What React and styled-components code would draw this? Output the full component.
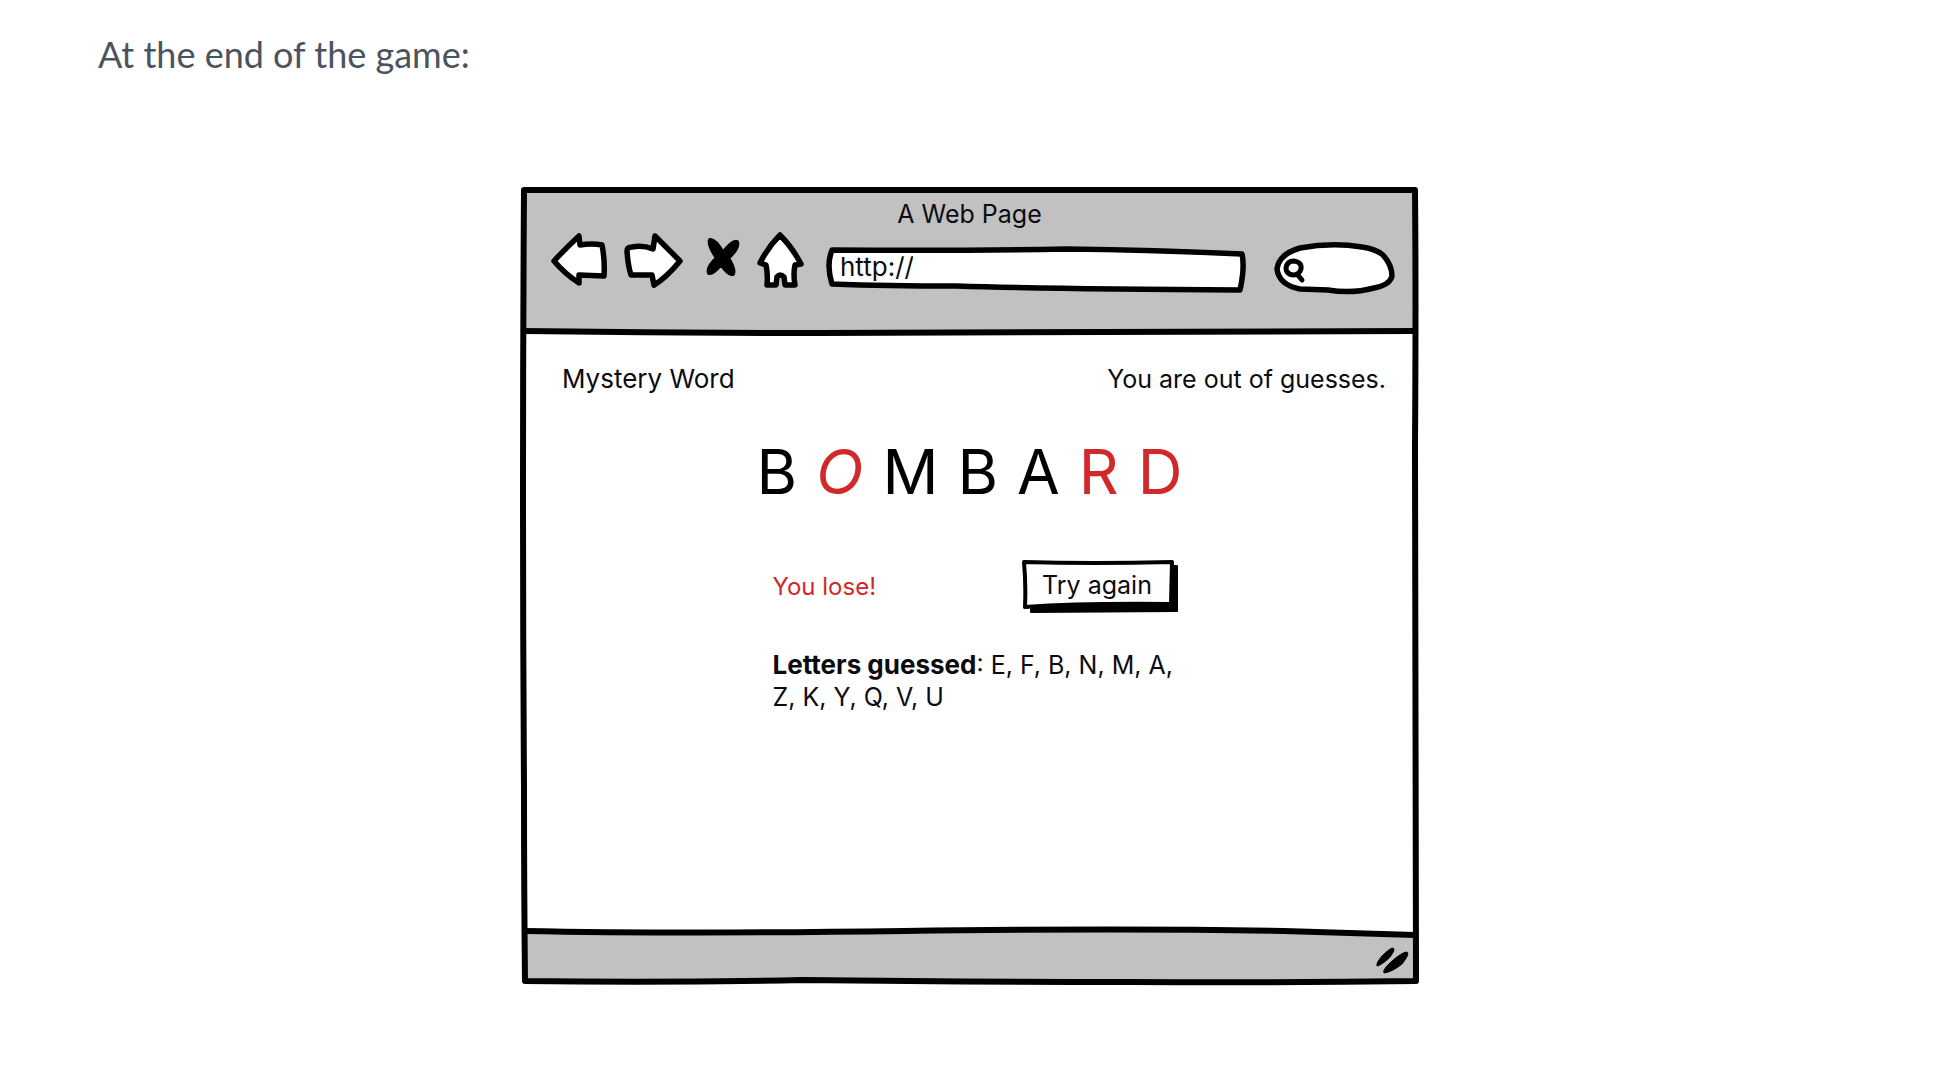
import React from "react";
import styled, { createGlobalStyle } from "styled-components";

const ink = "#000";
const grey = "#c1c1c1";
const red = "#d12929";

const GlobalStyle = createGlobalStyle`
  * { box-sizing: border-box; }
  body { margin: 0; background: #fff; }
`;

const Page = styled.main`
  padding: 27px 103px 80px 98px;
`;

const Caption = styled.p`
  margin: 0 0 106px;
  color: #4b545c;
  font: 400 36px/54px Lato, sans-serif;
`;

const BrowserWindow = styled.section`
  position: relative;
  display: flex;
  flex-direction: column;
  width: 100%;
  max-width: 897px;
  margin: 0 auto;
  color: #0c0c10;
  font: 400 25px/32px Inter, sans-serif;
`;

const Outline = styled.svg`
  position: absolute;
  inset: 0;
  width: 100%;
  height: 100%;
  overflow: visible;
  pointer-events: none;
  fill: none;
  stroke: ${ink};
  stroke-width: 6;
  stroke-linejoin: round;
`;

const Chrome = styled.header`
  margin: 2px 3px 0;
  padding: 9px 0 36px;
  background: ${grey};
`;

const PageTitle = styled.h1`
  margin: 0 0 1px;
  font: inherit;
  text-align: center;
`;

const Toolbar = styled.div`
  display: flex;
  height: 64px;
  padding: 0 20px 0 27px;
`;

const NavButton = styled.button`
  width: ${(p) => p.$width}px;
  margin-right: ${(p) => p.$gap}px;
  padding: 0;
  border: 0;
  background: none;
  cursor: pointer;
`;

const Glyph = styled.svg`
  display: block;
  width: 100%;
  height: 64px;
  overflow: visible;
  fill: #fff;
  stroke: ${ink};
  stroke-width: 5.5;
  stroke-linejoin: round;
  stroke-linecap: round;
`;

const Field = styled.label`
  position: relative;
  display: flex;
  align-items: center;
  flex: ${(p) => (p.$width ? `0 0 ${p.$width}px` : "1 1 0")};
  min-width: 0;
  margin-right: ${(p) => p.$gap || 0}px;
`;

const FieldShape = styled(Glyph)`
  position: absolute;
  inset: 0;
`;

const FieldInput = styled.input`
  position: relative;
  width: 100%;
  height: 32px;
  padding: 0 14px 0 ${(p) => p.$inset}px;
  margin-top: 8px;
  border: 0;
  outline: 0;
  background: none;
  color: inherit;
  font: inherit;
  font-size: 26px;
`;

const Content = styled.div`
  min-height: 599px;
  padding: 32px 32px 40px;
`;

const StatusRow = styled.div`
  display: flex;
  justify-content: space-between;
  padding-left: 9px;
`;

const StatusText = styled.span`
  font-size: ${(p) => (p.$large ? 26 : 25)}px;
`;

const Word = styled.div`
  display: flex;
  justify-content: center;
  gap: 19px;
  margin: 42px 0 53px;
  font-size: 62px;
  line-height: 70px;
`;

const Letter = styled.span`
  color: ${(p) => (p.$missed ? red : ink)};
  font-style: ${(p) => (p.$slanted ? "italic" : "normal")};
`;

const Outcome = styled.div`
  width: 100%;
  max-width: 418px;
  margin: 0 auto;
  padding-left: 12px;
`;

const OutcomeRow = styled.div`
  display: flex;
  align-items: center;
  justify-content: space-between;
  margin-bottom: 35px;
`;

const Verdict = styled.span`
  color: ${red};
  font-size: 24px;
`;

const RetryButton = styled.button`
  position: relative;
  width: 157px;
  height: 54px;
  padding: 0 6px 4px 0;
  border: 0;
  background: none;
  color: inherit;
  font: inherit;
  cursor: pointer;
`;

const RetryShape = styled.svg`
  position: absolute;
  inset: 0;
  width: 100%;
  height: 100%;
  stroke: ${ink};
  stroke-linejoin: round;
`;

const RetryLabel = styled.span`
  position: relative;
`;

const Guesses = styled.p`
  margin: 0;
`;

const GuessesLabel = styled.strong`
  font-size: 26px;
`;

const StatusBar = styled.footer`
  position: relative;
  display: flex;
  align-items: center;
  justify-content: flex-end;
  height: 52px;
  margin: 0 3px 2px;
`;

const StatusBarShape = styled.svg`
  position: absolute;
  inset: 0;
  width: 100%;
  height: 100%;
  overflow: visible;
  fill: ${grey};
`;

const ResizeGrip = styled.svg`
  position: relative;
  width: 34px;
  height: 28px;
  margin: 8px 6px 0 0;
  fill: ${ink};
  stroke: ${ink};
  stroke-width: 1;
  stroke-linejoin: round;
  overflow: visible;
`;

const word = [
  { letter: "B" },
  { letter: "O", missed: true, slanted: true },
  { letter: "M" },
  { letter: "B" },
  { letter: "A" },
  { letter: "R", missed: true },
  { letter: "D", missed: true },
];

const guesses = ["E", "F", "B", "N", "M", "A", "Z", "K", "Y", "Q", "V", "U"];

export default function App() {
  return (
    <Page>
      <GlobalStyle />
      <Caption>At the end of the game:</Caption>
      <BrowserWindow>
        <Chrome>
          <PageTitle>A Web Page</PageTitle>
          <Toolbar>
            <NavButton $width={56} $gap={17} aria-label="Back">
              <Glyph viewBox="0 0 56 64">
                <path d="M3 30 Q14 18 28 5 L29 14 Q41 12 51 14 Q54 29 53 45 L28 44 L28 52 Q14 43 3 30Z" />
              </Glyph>
            </NavButton>
            <NavButton $width={59} $gap={24} aria-label="Forward">
              <Glyph viewBox="0 0 59 64">
                <path d="M3 20 Q3 16 8 16 Q19 14 29 18 L31 5 L56 30 Q42 47 30 54 L28 44 L7 44 Q4 35 3 20Z" />
              </Glyph>
            </NavButton>
            <NavButton $width={32} $gap={17} aria-label="Stop">
              <Glyph viewBox="0 0 32 64">
                <path
                  d="M3 9 Q8 8 16 22 Q26 9 30 11 Q32 17 21 27 Q28 38 26 43 Q22 45 14 33 Q6 43 2 42 Q0 36 10 27 Q1 14 3 9Z"
                  fill={ink}
                  strokeWidth="4"
                />
              </Glyph>
            </NavButton>
            <NavButton $width={47} $gap={23} aria-label="Home">
              <Glyph viewBox="0 0 47 64">
                <path d="M24 4 Q36 16 45 33 L39 34 Q37 43 39 54 L29 54 L28 46 Q24 42 21 46 L20 54 L11 54 Q12 43 10 34 L4 32 Q12 16 24 4Z" />
              </Glyph>
            </NavButton>
            <Field $gap={27}>
              <FieldShape viewBox="0 0 421 64" preserveAspectRatio="none">
                <path d="M6 19 Q130 20 240 18 Q330 19 416 23 Q419 36 414 59 Q220 58 130 55 Q60 55 6 53 Q0 34 6 19Z" />
              </FieldShape>
              <FieldInput $inset={14} type="text" aria-label="Address" defaultValue="http://" />
            </Field>
            <Field $width={121}>
              <FieldShape viewBox="0 0 121 64">
                <path d="M3 38 Q5 23 26 17 Q58 11 88 16 Q102 18 109 24 Q118 34 118 45 Q116 54 100 57 Q78 63 54 59 L26 58 Q5 54 3 38Z" />
                <path d="M12 37 Q13 30 20 30 Q28 31 27 38 Q25 44 19 44 Q12 43 12 37Z M23 43 L28 49" strokeWidth="5" />
              </FieldShape>
              <FieldInput $inset={36} type="search" aria-label="Search" />
            </Field>
          </Toolbar>
        </Chrome>

        <Content>
          <StatusRow>
            <StatusText $large>Mystery Word</StatusText>
            <StatusText>You are out of guesses.</StatusText>
          </StatusRow>
          <Word>
            {word.map(({ letter, missed, slanted }, i) => (
              <Letter key={i} $missed={missed} $slanted={slanted}>
                {letter}
              </Letter>
            ))}
          </Word>
          <Outcome>
            <OutcomeRow>
              <Verdict>You lose!</Verdict>
              <RetryButton type="button">
                <RetryShape viewBox="0 0 157 54" preserveAspectRatio="none" aria-hidden="true">
                  <path d="M9 44 L146 43 L147 6 L155 6 L155 51 L9 52Z" fill={ink} strokeWidth="2" />
                  <path d="M2 2 Q70 4 150 2 L149 44 Q60 43 3 47 Q4 24 2 2Z" fill="#fff" strokeWidth="4" />
                </RetryShape>
                <RetryLabel>Try again</RetryLabel>
              </RetryButton>
            </OutcomeRow>
            <Guesses>
              <GuessesLabel>Letters guessed</GuessesLabel>: {guesses.join(", ")}
            </Guesses>
          </Outcome>
        </Content>

        <StatusBar>
          <StatusBarShape viewBox="0 0 891 52" preserveAspectRatio="none" aria-hidden="true">
            <path d="M0 1 Q160 4 380 1 Q600 -2 760 1 L891 5 V52 H0Z" />
            <path d="M0 1 Q160 4 380 1 Q600 -2 760 1 L891 5" fill="none" stroke={ink} strokeWidth="6" />
          </StatusBarShape>
          <ResizeGrip viewBox="0 0 34 28" aria-hidden="true">
            <path d="M2 20 Q1 17 7 10 Q15 2 18 2 Q21 3 15 11 Q7 19 2 20Z" />
            <path d="M9 27 Q7 24 16 16 Q27 6 32 6 Q35 8 27 18 Q17 26 9 27Z" />
          </ResizeGrip>
        </StatusBar>

        <Outline viewBox="0 0 897 797" preserveAspectRatio="none" aria-hidden="true">
          <path d="M3 3 H894 Q895 110 894 260 Q894 600 895 794 Q750 796 610 795 Q440 795 280 793 Q140 796 4 794 Q3 700 3 600 Q1 300 3 3Z" />
          <path d="M3 144 Q150 146 300 146 Q560 145 894 144" />
        </Outline>
      </BrowserWindow>
    </Page>
  );
}
